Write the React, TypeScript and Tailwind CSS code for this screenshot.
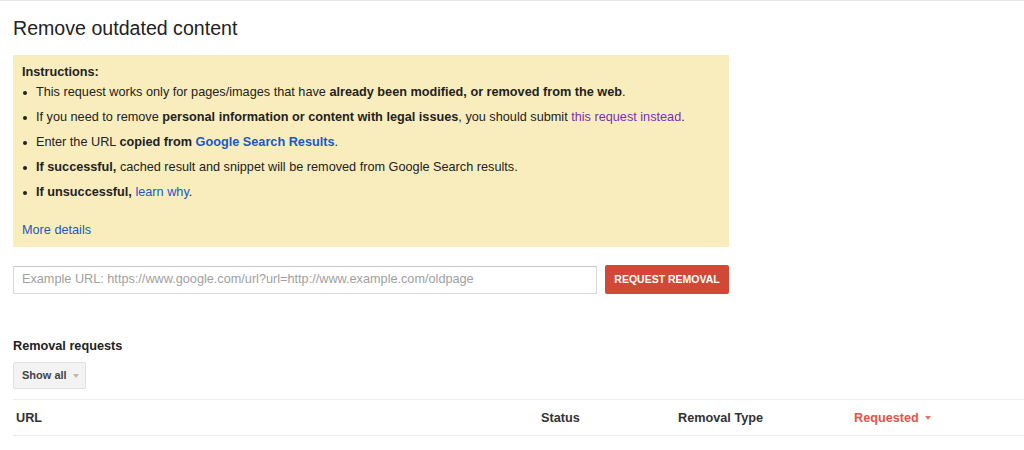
import React from "react";

const Tri = ({ color }: { color: string }) => (
  <span
    className="inline-block ml-[6px] align-middle w-0 h-0 border-l-[3.5px] border-r-[3.5px] border-t-[4px] border-l-transparent border-r-transparent"
    style={{ borderTopColor: color }}
  />
);

const Bullet = () => (
  <span className="w-[14px] shrink-0 flex items-center pl-[1px]">
    <span className="w-[4px] h-[4px] rounded-full bg-[#222]" />
  </span>
);

export default function App() {
  return (
    <div
      className="w-[1024px] h-[450px] bg-white border-t border-[#e5e5e5] overflow-hidden text-[12.7px] text-[#222]"
      style={{ fontFamily: '"Liberation Sans", Arial, sans-serif' }}
    >
      <div className="pl-[13px]">
        <h1 className="text-[19.6px] leading-[24px] text-[#222] pt-[15px] font-normal">Remove outdated content</h1>

        <div className="mt-[15px] w-[716px] h-[192px] bg-[#f9edbe] pl-[9px] pt-[9px]">
          <div className="font-bold leading-[17px]">Instructions:</div>
          <ul className="mt-[3px] flex flex-col gap-[8px] leading-[17px]">
            <li className="flex">
              <Bullet />
              <span>
                This request works only for pages/images that have <b>already been modified, or removed from the web</b>.
              </span>
            </li>
            <li className="flex">
              <Bullet />
              <span>
                If you need to remove <b>personal information or content with legal issues</b>, you should submit{" "}
                <span className="text-[#7b2fb5]">this request instead</span>.
              </span>
            </li>
            <li className="flex">
              <Bullet />
              <span>
                Enter the URL <b>copied from</b> <b className="text-[#1a58c4]">Google Search Results</b>.
              </span>
            </li>
            <li className="flex">
              <Bullet />
              <span>
                <b>If successful,</b> cached result and snippet will be removed from Google Search results.
              </span>
            </li>
            <li className="flex">
              <Bullet />
              <span>
                <b>If unsuccessful,</b> <span className="text-[#1a58c4]">learn why</span>.
              </span>
            </li>
          </ul>
          <div className="mt-[21px] leading-[17px] text-[#1a58c4]">More details</div>
        </div>

        <div className="mt-[18px] flex items-center gap-[8px]">
          <div className="w-[584px] h-[28px] border border-[#d9d9d9] border-t-[#c8c8c8] flex items-center pl-[8px] text-[#a0a0a0]">
            Example URL: https://www.google.com/url?url=http://www.example.com/oldpage
          </div>
          <button className="w-[124px] h-[29px] bg-[#d14836] rounded-[2px] text-white font-bold text-[10.5px]">
            REQUEST REMOVAL
          </button>
        </div>

        <div className="mt-[44px] font-bold leading-[17px] text-[#222]">Removal requests</div>

        <div className="mt-[7px] w-[73px] h-[27px] bg-[#f3f3f3] border border-[#e0e0e0] rounded-[2px] flex items-center pl-[8px] text-[11px] font-bold text-[#444]">
          Show all
          <Tri color="#b8b8b8" />
        </div>

        <div className="mt-[10px] h-[37px] pt-[2px] border-t border-b border-[#ececec] flex items-center font-bold text-[#333]">
          <div className="w-[528px] pl-[3px]">URL</div>
          <div className="w-[137px]">Status</div>
          <div className="w-[176px]">Removal Type</div>
          <div className="text-[#df5548] flex items-center">
            Requested
            <Tri color="#e8776b" />
          </div>
        </div>
      </div>
    </div>
  );
}
